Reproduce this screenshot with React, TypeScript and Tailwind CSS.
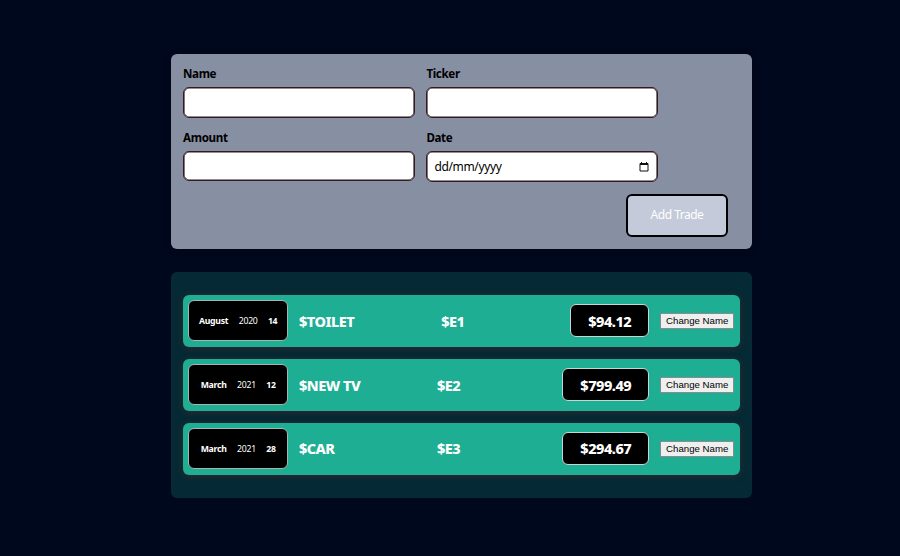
type Trade = { month: string; year: string; day: string; name: string; ticker: string; amount: string };

const trades: Trade[] = [
  { month: "August", year: "2020", day: "14", name: "$TOILET", ticker: "$E1", amount: "$94.12" },
  { month: "March", year: "2021", day: "12", name: "$NEW TV", ticker: "$E2", amount: "$799.49" },
  { month: "March", year: "2021", day: "28", name: "$CAR", ticker: "$E3", amount: "$294.67" },
];

const inputClass =
  "w-full rounded-[6px] border border-[#311a22] bg-white px-[6px] outline-none shadow-[inset_0_0_0_0.6px_#311a22]";

function Field({ label, date = false }: { label: string; date?: boolean }) {
  return (
    <label className="flex w-[232px] flex-col">
      <span className="mb-[5px] block h-4 text-[11.6px] leading-4 font-bold tracking-[-0.35px] text-black">{label}</span>
      {date ? (
        <span className={`${inputClass} flex h-[31.5px] items-center justify-between pt-px pr-[8px] pl-[7px] text-[12px] tracking-[-0.35px] text-black`}>
          <span>dd/mm/yyyy</span>
          <svg width="10" height="10" viewBox="0 0 10 10" fill="none" stroke="#111" strokeWidth="1">
            <path d="M1 1.5h8v7.5H1zM1 2.5h8M2.5 0v2M7.5 0v2" />
          </svg>
        </span>
      ) : (
        <input className={`${inputClass} h-[30.5px]`} />
      )}
    </label>
  );
}

function TradeRow({ trade }: { trade: Trade }) {
  return (
    <li className="flex h-[52.2px] items-center rounded-[6px] bg-[#1dae93] px-[5.4px] shadow-[0_1px_6px_rgba(65,40,45,0.8)]">
      <div className="flex h-[41px] w-[99.5px] shrink-0 items-center justify-center gap-[10.3px] rounded-[6px] border border-[#a5b5b1] bg-black pt-[2px] text-[8.7px] tracking-[-0.25px] text-white">
        <span className="font-bold">{trade.month}</span>
        <span>{trade.year}</span>
        <span className="font-bold">{trade.day}</span>
      </div>
      <div className="ml-[11px] flex flex-1 items-center text-[14.5px] font-extrabold tracking-[-0.5px] text-white">
        <div className="flex flex-1 items-center pt-px">
          <h2 className="w-[52.5%]">{trade.name}</h2>
          <h2 className="flex-1">{trade.ticker}</h2>
        </div>
        <div className="flex h-[33px] items-center rounded-[6px] border border-[#c5d8d4] bg-black pr-[17px] pl-[17.4px] pt-px">
          {trade.amount}
        </div>
      </div>
      <button className="ml-[11px] h-[16px] w-[74px] shrink-0 border border-[#8b8b8b] bg-[#efefef] font-['Liberation_Sans',sans-serif] text-[9.67px] leading-[13px] whitespace-nowrap text-black">
        Change Name
      </button>
    </li>
  );
}

export default function App() {
  return (
    <main className="flex h-[556px] w-[900px] flex-col overflow-hidden bg-[#00081d] pt-[54px] pl-[171px] font-['Noto_Sans',sans-serif]">
      <section className="h-[194.5px] w-[580.6px] rounded-[6px] bg-[#878fa3] px-3 pt-3 shadow-[0_1px_6px_rgba(0,0,0,0.25)]">
        <div className="flex flex-wrap gap-x-[11.4px] gap-y-[12px]">
          <Field label="Name" />
          <Field label="Ticker" />
          <Field label="Amount" />
          <Field label="Date" date />
        </div>
        <div className="mt-[11.5px] flex justify-end pr-[11.5px]">
          <button className="h-[43px] w-[102.3px] rounded-[6px] border-2 border-black bg-[#c4cad9] text-[12px] tracking-[-0.5px] text-white">
            Add Trade
          </button>
        </div>
      </section>
      <ul className="mt-[23px] flex h-[226.5px] w-[580.6px] flex-col gap-[11.8px] rounded-[6px] bg-[#052a35] px-[12px] pt-[23.3px]">
        {trades.map((trade) => (
          <TradeRow key={trade.name} trade={trade} />
        ))}
      </ul>
    </main>
  );
}
